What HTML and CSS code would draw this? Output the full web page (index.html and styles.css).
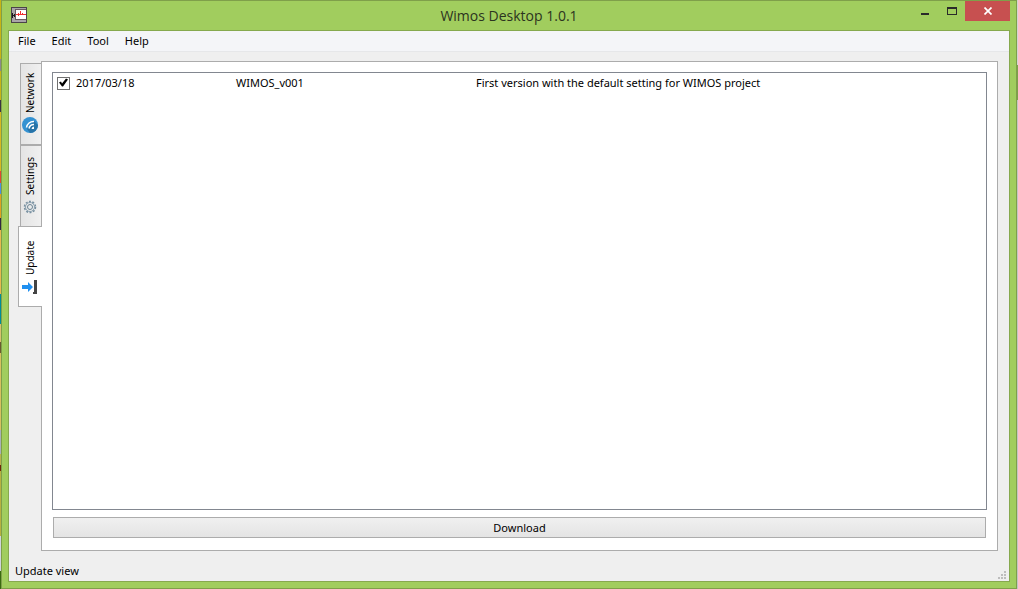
FILE: index.html
```html
<!DOCTYPE html>
<html lang="en">
<head>
<meta charset="utf-8">
<title>Wimos Desktop 1.0.1</title>
<link rel="stylesheet" href="styles.css">
</head>
<body>
<div class="window">
  <header class="titlebar">
    <svg class="app-icon" width="16" height="16" viewBox="0 0 16 16" shape-rendering="crispEdges">
      <rect x="0" y="0" width="16" height="16" rx="1" fill="#4a4448"/>
      <rect x="1" y="1" width="14" height="14" fill="#a9a5a8"/>
      <rect x="4" y="2" width="11" height="11" fill="#6a5c60"/>
      <rect x="5" y="3" width="10" height="9" fill="#fff"/>
      <path d="M5 7h10v1H5z" fill="#f03030"/>
      <path d="M7 6h1v3H7zM9 4h1v4H9zM11 6h1v2h-1z" fill="#f03030"/>
      <path d="M1 6h1v5H1zM3 7h1v3H3zM2 8h2v1H2z" fill="#1c1a1c"/>
    </svg>
    <h1 class="title">Wimos Desktop 1.0.1</h1>
    <div class="controls">
      <button class="control" aria-label="Minimize"><svg width="8" height="8" viewBox="0 0 8 8"><path d="M0 6h8v2H0z" fill="#2a2a2a"/></svg></button>
      <button class="control" aria-label="Maximize"><svg width="10" height="8" viewBox="0 0 10 8"><path d="M0 0h10v8H0zM1 2v5h8V2z" fill="#2a2a2a" fill-rule="evenodd"/></svg></button>
      <button class="control close" aria-label="Close"><svg width="8" height="8" viewBox="0 0 8 8"><path d="M.5.500 7.500 7.500M7.500.500.500 7.500" stroke="#fff" stroke-width="1.700"/></svg></button>
    </div>
  </header>
  <div class="client">
    <nav class="menubar">
      <button class="menu">File</button>
      <button class="menu">Edit</button>
      <button class="menu">Tool</button>
      <button class="menu">Help</button>
    </nav>
    <main class="workspace">
      <div class="tabs" role="tablist" aria-orientation="vertical">
        <button class="tab" role="tab" aria-selected="false">
          <svg class="tab-icon" width="16" height="16" viewBox="0 0 16 16">
            <circle cx="8" cy="8" r="8" fill="#3492d2"/>
            <path d="M8 16A8 8 0 0 0 16 8L12 4 5 12z" fill="#2874a8"/>
            <path d="M4.500 10.500A7 7 0 0 1 12 4.500M7 11.500A5 5 0 0 1 12 7.500" fill="none" stroke="#fff" stroke-width="1.500"/>
            <path d="M9.500 12A3 3 0 0 1 12 9.500V12z" fill="#fff"/>
          </svg>
          <span>Network</span>
        </button>
        <button class="tab" role="tab" aria-selected="false">
          <svg class="tab-icon" width="16" height="16" viewBox="0 0 16 16">
            <circle cx="8" cy="8" r="4.500" fill="none" stroke="#8ea4b4" stroke-width="1"/>
            <circle cx="8" cy="8" r="5.500" fill="none" stroke="#7890a0" stroke-width="1.500" stroke-dasharray="2 1.456"/>
            <circle cx="8" cy="8" r="2.500" fill="none" stroke="#6a8494"/>
          </svg>
          <span>Settings</span>
        </button>
        <button class="tab selected" role="tab" aria-selected="true">
          <svg class="tab-icon" width="16" height="16" viewBox="0 0 16 16">
            <path d="M0 6h6V3l5 5-5 5v-3H0z" fill="#2090f0"/>
            <path d="M12 1h3v14h-4v-2h1z" fill="#444"/>
          </svg>
          <span>Update</span>
        </button>
      </div>
      <section class="pane" role="tabpanel">
        <div class="list">
          <label class="row">
            <span class="date"><input class="check" type="checkbox" checked>2017/03/18</span>
            <span class="name">WIMOS_v001</span>
            <span class="description">First version with the default setting for WIMOS project</span>
          </label>
        </div>
        <button class="download">Download</button>
      </section>
    </main>
    <footer class="statusbar">
      <span>Update view</span>
      <svg class="grip" width="8" height="8" viewBox="0 0 8 8"><path d="M6 0h2v2H6zM3 3h2v2H3zM6 3h2v2H6zM0 6h2v2H0zM3 6h2v2H3zM6 6h2v2H6z" fill="#bdbdbd"/></svg>
    </footer>
  </div>
</div>
</body>
</html>
```
FILE: styles.css
```css
* { box-sizing: border-box; }

body {
  margin: 0;
  height: 100vh;
  display: flex;
  padding: 0 1px;
  background:
    linear-gradient(#d4d4d4 11%, #7f9f4a 11% 17%, #c4c4c4 17%) right / 1px 100% no-repeat,
    linear-gradient(#c8b414 10%, #8a8a8a 10% 12%, #c8b414 12% 17%, #3a3440 17% 19%, #d8b820 19% 29%, #e04830 29% 31%, #4a90e0 31% 33%, #e0a020 33% 37%, #302840 37% 39%, #e8b850 39% 50%, #008c98 50% 55%, #d8c070 55% 58%, #6a5a30 58% 60%, #d8c060 60% 73%, #a8b0b8 73% 77%, #b8b050 77% 79%, #702808 79% 80%, #b8b040 80% 91%, #d0d4dc 91% 97%, #3a6a10 97%);
  font: 11px/16px "Noto Sans", "Open Sans", sans-serif;
  color: #000;
}

button {
  margin: 0;
  padding: 0;
  border: 0;
  background: none;
  font: inherit;
  color: inherit;
}

svg { display: block; flex: none; }

.window {
  flex: 1;
  display: flex;
  flex-direction: column;
  padding: 0 6px 6px;
  border: 1px solid #7f9f4a;
  background: #a1cd5e;
}

.titlebar {
  display: grid;
  grid-template-columns: 1fr auto 1fr;
  height: 29px;
}

.app-icon { margin: 6px 0 0 3px; }

.title {
  margin: 4px 0 0;
  font: 14px/22px "Open Sans", sans-serif;
  color: #2c3420;
}

.controls {
  display: flex;
  justify-content: flex-end;
}

.control {
  display: flex;
  align-items: center;
  justify-content: center;
  width: 27px;
  height: 20px;
}

.close {
  width: 45px;
  background: #c75050;
}

.client {
  flex: 1;
  display: flex;
  flex-direction: column;
  border: 1px solid #86a94e;
  background: #efefef;
}

.menubar {
  display: flex;
  height: 21px;
  padding-left: 1px;
  border-bottom: 1px solid #e6e7e9;
  background: #f4f5f8;
}

.menu { padding: 0 8px; }

.workspace {
  flex: 1;
  display: flex;
  padding: 9px 11px 0 9px;
}

.tabs {
  display: flex;
  flex-direction: column;
  align-items: flex-end;
  width: 24px;
  margin-right: -1px;
  padding-top: 2px;
}

.tab {
  display: flex;
  align-items: center;
  gap: 4px;
  width: 22px;
  height: 82px;
  padding: 11px 1px 11px 3px;
  border: 1px solid #acacac;
  background: linear-gradient(90deg, #f0f0f0, #e4e4e4);
  font-size: 10px;
  writing-mode: vertical-rl;
  transform: rotate(180deg);
}

.tab-icon { transform: rotate(180deg); }

.selected {
  width: 24px;
  height: 81px;
  margin-top: -1px;
  padding-right: 3px;
  padding-left: 4px;
  border-left: 0;
  background: #fff;
  z-index: 1;
}

.pane {
  flex: 1;
  display: flex;
  flex-direction: column;
  gap: 7px;
  padding: 10px;
  border: 1px solid #acacac;
  background: #fff;
}

.list {
  flex: 1;
  border: 1px solid #828790;
}

.row {
  display: grid;
  grid-template-columns: 183px 240px 1fr;
  padding-top: 2px;
}

.date {
  display: flex;
  align-items: center;
  gap: 6px;
  padding-left: 4px;
}

.check {
  appearance: none;
  width: 13px;
  height: 13px;
  margin: 0;
  border: 1px solid #707070;
  background: #fff;
}

.check:checked::before {
  content: "";
  display: block;
  width: 11px;
  height: 11px;
  background: #000;
  clip-path: polygon(1px 5px, 3px 4px, 4px 6px, 8px 1px, 10px 2px, 5px 9px, 4px 9px);
}

.download {
  height: 21px;
  margin: 0 1px 2px;
  border: 1px solid #acacac;
  background: linear-gradient(#f0f0f0, #e4e4e4);
}

.statusbar {
  display: flex;
  justify-content: space-between;
  align-items: flex-end;
  height: 30px;
  padding: 0 3px 2px 6px;
}
```
